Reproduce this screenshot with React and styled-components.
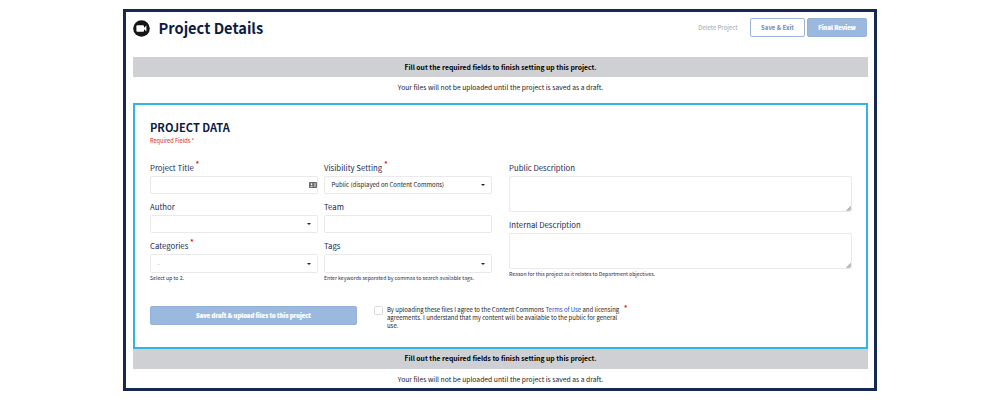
import React from "react";
import styled, { createGlobalStyle } from "styled-components";

const Global = createGlobalStyle`
  * { box-sizing: border-box; }
  body {
    margin: 0;
    background: #fff;
    color: #0c1b42;
    font-family: "Noto Sans CJK SC", "Noto Sans", sans-serif;
  }
`;

const Page = styled.div`
  width: 1000px;
  height: 400px;
  padding: 9px 123px;
`;

const Frame = styled.main`
  width: 754px;
  height: 382px;
  padding: 0 6px 0 7px;
  border: 3px solid #162a51;
  overflow: hidden;
`;

const Header = styled.header`
  display: flex;
  align-items: center;
  height: 45px;
  padding: 0 1px 14px 0;
`;

const CameraBadge = styled.svg`
  width: 17px;
  height: 17px;
  margin-top: 2px;
`;

const Title = styled.h1`
  margin: 1px auto 0 8.5px;
  font-size: 14.65px;
  line-height: 20px;
  font-weight: 700;
  white-space: nowrap;
`;

const TextButton = styled.button`
  padding: 0;
  border: 0;
  margin-right: 12.5px;
  background: none;
  color: #a2a4a8;
  font: 400 6px/18px "Noto Sans CJK SC", sans-serif;
`;

const Button = styled.button`
  width: ${(p) => p.$width}px;
  height: 19px;
  padding: 0;
  margin-left: ${(p) => p.$gap || 0}px;
  border: 1px solid ${(p) => (p.$outline ? "#9fb4da" : "#93b1dc")};
  border-radius: 2px;
  background: ${(p) => (p.$outline ? "#fff" : "#9bb8de")};
  color: ${(p) => (p.$outline ? "#7d96c6" : "#fff")};
  font: 900 5.85px/16px "Noto Sans CJK SC", sans-serif;
  white-space: nowrap;
  -webkit-text-stroke: ${(p) => (p.$outline ? 0 : 0.2)}px #fff;
`;

const Banner = styled.div`
  height: 20px;
  background: #cfd0d4;
  color: #000;
  font-size: 6.8px;
  line-height: ${(p) => p.$line}px;
  font-weight: 700;
  text-align: center;
`;

const Notice = styled.p`
  height: ${(p) => p.$height}px;
  margin: 0;
  color: #222;
  font-size: 6.78px;
  line-height: 20px;
  text-align: center;
`;

const Panel = styled.section`
  height: 246px;
  padding: 14px 14px 0 15px;
  border: 2px solid #2db6e6;
`;

const PanelTitle = styled.h2`
  margin: 0;
  font-size: 11.05px;
  line-height: 16px;
  font-weight: 700;
`;

const RequiredNote = styled.p`
  height: 27px;
  margin: 0;
  color: #d01c2a;
  font-size: 5.6px;
  line-height: 13px;
`;

const Fields = styled.div`
  display: grid;
  grid-template-columns: 168px 168px 354px;
  column-gap: 6px;
  height: 144px;
`;

const Column = styled.div`
  margin-left: ${(p) => p.$indent || 0}px;
  width: ${(p) => p.$width || 168}px;
`;

const Field = styled.div`
  height: ${(p) => p.$height || 39}px;
`;

const Label = styled.div`
  display: flex;
  height: 14px;
  color: #1c2c54;
  font-size: 7.77px;
  line-height: 12px;
  white-space: nowrap;
`;

const Star = styled.sup`
  margin: -5px 0 0 2px;
  color: #d81324;
  font-size: 6.2px;
  line-height: 14px;
  font-weight: 900;
`;

const Control = styled.div`
  display: flex;
  align-items: center;
  justify-content: space-between;
  height: ${(p) => p.$height || 18}px;
  padding: 0 ${(p) => (p.$card ? 0 : 6)}px 0 6.5px;
  border: 1px solid #e9e9eb;
  border-radius: 2px;
  color: ${(p) => (p.$muted ? "#999" : "#222")};
  font-size: 6px;
  line-height: 16px;
  white-space: nowrap;
`;

const Caret = styled.span`
  margin-left: auto;
  border: 2px solid transparent;
  border-top-color: #222;
  border-bottom: 0;
`;

const CardIcon = styled.svg`
  width: 8px;
  height: 6px;
  margin-left: auto;
`;

const TextArea = styled.div`
  display: flex;
  align-items: flex-end;
  justify-content: flex-end;
  height: 36px;
  border: 1px solid #e9e9eb;
  border-radius: 2px;
`;

const Grip = styled.svg`
  width: 5px;
  height: 5px;
`;

const Hint = styled.div`
  color: #1c2c54;
  font-size: 5.18px;
  line-height: 10px;
  white-space: nowrap;
`;

const Actions = styled.div`
  display: flex;
  align-items: flex-start;
`;

const Checkbox = styled.span`
  width: 9px;
  height: 9px;
  margin: 0 4px 0 17px;
  border: 1px solid #d9d9dc;
  border-radius: 1.5px;
`;

const Terms = styled.p`
  margin: 0;
  color: #222;
  font-size: 5.97px;
  line-height: 8px;
  white-space: nowrap;
  width: 235px;
`;

const Link = styled.a`
  color: #0050d0;
`;

function Area() {
  return (
    <TextArea>
      <Grip viewBox="0 0 5 5">
        <path d="M0.5 5L5 0.5M2.5 5L5 2.5" stroke="#aaa" strokeWidth="1.1" />
      </Grip>
    </TextArea>
  );
}

function Message({ height, line }) {
  return (
    <>
      <Banner $line={line}>Fill out the required fields to finish setting up this project.</Banner>
      <Notice $height={height}>
        Your files will not be uploaded until the project is saved as a draft.
      </Notice>
    </>
  );
}

export default function App() {
  return (
    <Page>
      <Global />
      <Frame>
        <Header>
          <CameraBadge viewBox="0 0 17 17">
            <circle cx="8.5" cy="8.5" r="8.3" fill="#151515" />
            <rect x="3.4" y="5.2" width="7.6" height="6.6" rx="1" fill="#fff" />
            <path d="M10.9 8.1L13.4 5.4V11.6L10.9 9Z" fill="#fff" />
          </CameraBadge>
          <Title>Project Details</Title>
          <TextButton>Delete Project</TextButton>
          <Button $width={55} $outline>Save &amp; Exit</Button>
          <Button $width={60} $gap={2}>Final Review</Button>
        </Header>
        <Message height={26} line={20} />
        <Panel>
          <PanelTitle>PROJECT DATA</PanelTitle>
          <RequiredNote>Required Fields *</RequiredNote>
          <Fields>
            <Column>
              <Field>
                <Label>Project Title<Star>*</Star></Label>
                <Control $card>
                  <CardIcon viewBox="0 0 8 6">
                    <rect width="8" height="6" rx="0.8" fill="#666" />
                    <circle cx="2.5" cy="2.1" r="0.9" fill="#fff" />
                    <path d="M1 4.8Q2.5 2.6 4 4.8Z" fill="#fff" />
                    <path d="M4.8 1.8H7M4.8 3H7M4.8 4.2H7" stroke="#fff" strokeWidth="0.6" />
                  </CardIcon>
                </Control>
              </Field>
              <Field>
                <Label>Author</Label>
                <Control><Caret /></Control>
              </Field>
              <Field>
                <Label>Categories<Star>*</Star></Label>
                <Control $height={19} $muted>-<Caret /></Control>
                <Hint>Select up to 2.</Hint>
              </Field>
            </Column>
            <Column>
              <Field>
                <Label>Visibility Setting<Star>*</Star></Label>
                <Control>Public (displayed on Content Commons)<Caret /></Control>
              </Field>
              <Field>
                <Label>Team</Label>
                <Control />
              </Field>
              <Field>
                <Label>Tags</Label>
                <Control $height={19}><Caret /></Control>
                <Hint>Enter keywords separated by commas to search available tags.</Hint>
              </Field>
            </Column>
            <Column $indent={11} $width={343}>
              <Field $height={57}>
                <Label>Public Description</Label>
                <Area />
              </Field>
              <Field $height={60}>
                <Label>Internal Description</Label>
                <Area />
                <Hint>Reason for this project as it relates to Department objectives.</Hint>
              </Field>
            </Column>
          </Fields>
          <Actions>
            <Button $width={207}>Save draft &amp; upload files to this project</Button>
            <Checkbox />
            <Terms>
              By uploading these files I agree to the Content Commons <Link>Terms of Use</Link> and licensing<br />
              agreements. I understand that my content will be available to the public for general<br />
              use.
            </Terms>
            <Star>*</Star>
          </Actions>
        </Panel>
        <Message height={20} line={19} />
      </Frame>
    </Page>
  );
}
